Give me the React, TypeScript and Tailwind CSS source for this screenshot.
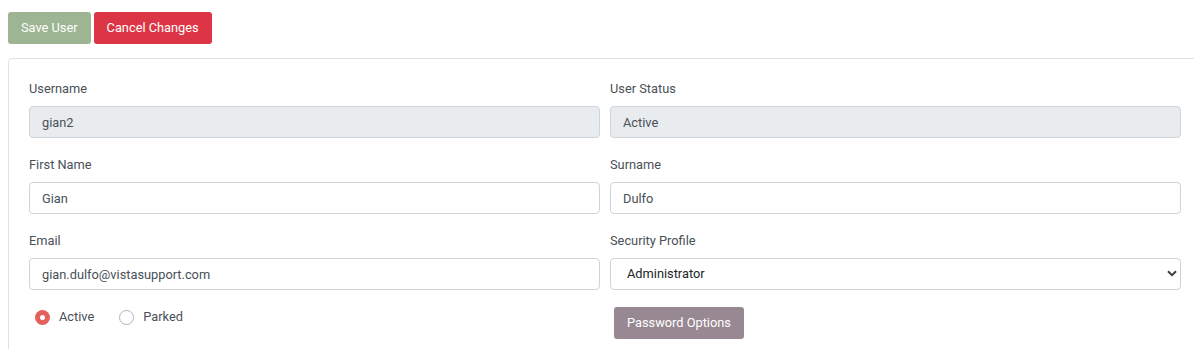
import { useState } from "react"

function Field({ label, value, disabled }: { label: string; value: string; disabled?: boolean }) {
  return (
    <div className="flex flex-col">
      <label className="mb-[8px] h-[20px] leading-[22px] text-[12.8px] text-[#495057]">{label}</label>
      <input
        type="text"
        defaultValue={value}
        disabled={disabled}
        className={
          "h-[32px] rounded-[4px] border border-[#ced4da] px-[12px] text-[12.8px] text-[#495057] outline-none " +
          (disabled ? "bg-[#e9ecef]" : "bg-white")
        }
      />
    </div>
  )
}

function Radio({ label, checked, onClick }: { label: string; checked: boolean; onClick: () => void }) {
  return (
    <button type="button" onClick={onClick} className="flex items-center gap-[9px] text-[12.8px] text-[#495057]">
      {checked ? (
        <span className="flex h-[15px] w-[15px] items-center justify-center rounded-full bg-[#e4605e]">
          <span className="h-[5px] w-[5px] rounded-full bg-white" />
        </span>
      ) : (
        <span className="h-[15px] w-[15px] rounded-full border border-[#adb5bd] bg-white" />
      )}
      {label}
    </button>
  )
}

export default function App() {
  const [parked, setParked] = useState(false)

  return (
    <div className="h-[349px] w-[1194px] overflow-hidden bg-white" style={{ fontFamily: "Roboto, 'Liberation Sans', sans-serif" }}>
      <div className="flex gap-[3px] pl-[8px] pt-[12px]">
        <button className="h-[32px] rounded-[3px] bg-[#9db592] px-[13px] text-[12.8px] text-white">Save User</button>
        <button className="h-[32px] rounded-[3px] bg-[#dc3545] px-[13px] text-[12.8px] text-white">Cancel Changes</button>
      </div>

      <div className="ml-[8px] mt-[14px] w-[1194px] rounded-tl-[4px] border border-[#dee2e6] px-[20px] pb-[20px] pt-[19px]">
        <div className="grid grid-cols-2 gap-x-[10px] gap-y-[16px]">
          <Field label="Username" value="gian2" disabled />
          <Field label="User Status" value="Active" disabled />
          <Field label="First Name" value="Gian" />
          <Field label="Surname" value="Dulfo" />
          <Field label="Email" value="gian.dulfo@vistasupport.com" />
          <div className="flex flex-col">
            <label className="mb-[8px] h-[20px] leading-[22px] text-[12.8px] text-[#495057]">Security Profile</label>
            <div className="relative">
              <select className="h-[32px] w-full appearance-none rounded-[4px] border border-[#ced4da] bg-white pl-[16px] text-[12.8px] text-[#212529] outline-none">
                <option>Administrator</option>
                <option>User</option>
              </select>
              <svg className="pointer-events-none absolute right-[4px] top-[12px]" width="10" height="7" viewBox="0 0 10 7">
                <path d="M1 1.2 5 5.2 9 1.2" fill="none" stroke="#3c4043" strokeWidth="2" />
              </svg>
            </div>
          </div>
        </div>

        <div className="mt-[17px] grid grid-cols-2 gap-x-[10px]">
          <div className="flex h-[20px] items-center gap-[25px] pl-[6px]">
            <Radio label="Active" checked={!parked} onClick={() => setParked(false)} />
            <Radio label="Parked" checked={parked} onClick={() => setParked(true)} />
          </div>
          <div className="pl-[4px]">
            <button className="h-[32px] rounded-[3px] bg-[#978891] px-[13px] text-[12.8px] text-white">Password Options</button>
          </div>
        </div>
      </div>
    </div>
  )
}
